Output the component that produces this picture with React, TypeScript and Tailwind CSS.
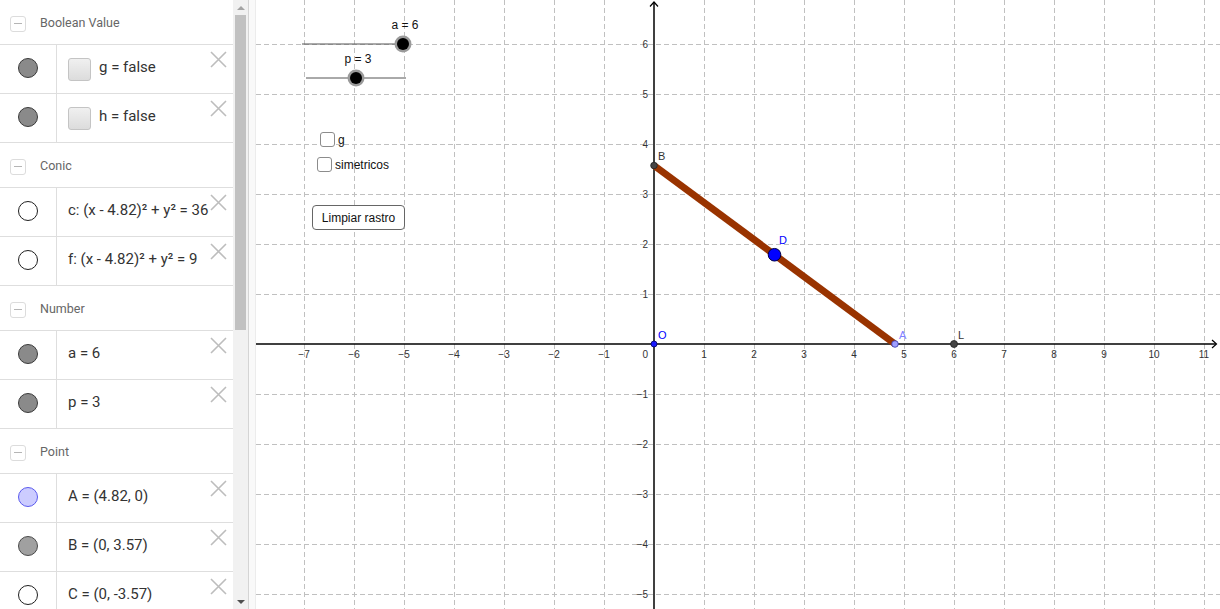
import React from "react";

type Dot = "grey" | "white" | "blue" | "lightgrey";

type Entry =
  | { type: "header"; label: string }
  | { type: "row"; dot: Dot; text: string; checkbox?: boolean };

const entries: Entry[] = [
  { type: "header", label: "Boolean Value" },
  { type: "row", dot: "grey", text: "g = false", checkbox: true },
  { type: "row", dot: "grey", text: "h = false", checkbox: true },
  { type: "header", label: "Conic" },
  { type: "row", dot: "white", text: "c: (x - 4.82)² + y² = 36" },
  { type: "row", dot: "white", text: "f: (x - 4.82)² + y² = 9" },
  { type: "header", label: "Number" },
  { type: "row", dot: "grey", text: "a = 6" },
  { type: "row", dot: "grey", text: "p = 3" },
  { type: "header", label: "Point" },
  { type: "row", dot: "blue", text: "A = (4.82, 0)" },
  { type: "row", dot: "lightgrey", text: "B = (0, 3.57)" },
  { type: "row", dot: "white", text: "C = (0, -3.57)" },
];

const dotClass: Record<Dot, string> = {
  grey: "bg-[#8a8a8a] border-[#3a3a3a]",
  white: "bg-white border-[#1f1f1f]",
  blue: "bg-[#ccccff] border-[#5a5aee]",
  lightgrey: "bg-[#a0a0a0] border-[#4a4a4a]",
};

function CloseIcon() {
  return (
    <svg width="17" height="17" viewBox="0 0 17 17" className="absolute right-[6px] top-[6px]">
      <path d="M1 1 L16 16 M16 1 L1 16" stroke="#bdbdbd" strokeWidth="1.6" fill="none" />
    </svg>
  );
}

function AlgebraView() {
  return (
    <div className="w-[233px] h-full overflow-hidden bg-white" style={{ fontFamily: "Roboto, 'Liberation Sans', sans-serif" }}>
      {entries.map((e, i) =>
        e.type === "header" ? (
          <div key={i} className="h-[45px] flex items-center pt-[3px] pl-[10px] border-b border-[#dedede]">
            <div className="w-[16px] h-[16px] rounded-[3px] border border-[#dcdcdc] flex items-center justify-center">
              <div className="w-[8px] h-[1.5px] bg-[#b5b5b5]" />
            </div>
            <span className="ml-[14px] text-[12.5px] text-[#666]">{e.label}</span>
          </div>
        ) : (
          <div key={i} className="relative h-[49px] flex border-b border-[#dedede]">
            <div className="w-[57px] shrink-0 border-r border-[#dedede] flex items-center justify-center pb-[3px]">
              <div className={`w-[20px] h-[20px] rounded-full border ${dotClass[e.dot]}`} />
            </div>
            <div className="flex-1 flex items-center pl-[11px] pb-[3px] overflow-hidden whitespace-nowrap">
              {e.checkbox && (
                <div className="w-[23px] h-[23px] mr-[8px] mt-[4px] rounded-[3px] border border-[#c4c4c4] bg-gradient-to-b from-[#f0f0f0] to-[#dcdcdc]" />
              )}
              <span className="text-[15px] text-[#333]">{e.text}</span>
            </div>
            <CloseIcon />
          </div>
        )
      )}
    </div>
  );
}

function Scrollbar() {
  return (
    <div className="w-[15px] h-full bg-[#f1f1f1] flex flex-col items-center">
      <div className="h-[15px] flex items-center justify-center">
        <div className="w-0 h-0 border-l-[4px] border-r-[4px] border-b-[4px] border-l-transparent border-r-transparent border-b-[#a3a3a3]" />
      </div>
      <div className="w-[11px] h-[315px] bg-[#c1c1c1]" />
      <div className="flex-1" />
      <div className="h-[15px] flex items-center justify-center">
        <div className="w-0 h-0 border-l-[4px] border-r-[4px] border-t-[4px] border-l-transparent border-r-transparent border-t-[#505050]" />
      </div>
    </div>
  );
}

const ox = 654;
const oy = 344;
const u = 50;
const fmt = (n: number) => (n < 0 ? `\u2212${-n}` : `${n}`);

function Graphics() {
  const xTicks = Array.from({ length: 19 }, (_, i) => i - 7).filter((n) => n !== 0);
  const yTicks = [6, 5, 4, 3, 2, 1, -1, -2, -3, -4, -5];
  const vLines = Array.from({ length: 19 }, (_, i) => ox + (i - 7) * u).filter((x) => x !== ox);
  const hLines = yTicks.map((n) => oy - n * u);
  const Bx = ox;
  const By = oy - 3.57 * u;
  const Ax = ox + 4.82 * u;
  const Dx = (Ax + Bx) / 2;
  const Dy = (oy + By) / 2;

  return (
    <svg width="964" height="609" viewBox="256 0 964 609" className="block" style={{ fontFamily: "'Liberation Sans', Arial, sans-serif" }}>
      {vLines.map((x) => (
        <line key={`v${x}`} x1={x + 0.5} y1={0} x2={x + 0.5} y2={609} stroke="#c0c0c0" strokeDasharray="5 3" />
      ))}
      {hLines.map((y) => (
        <line key={`h${y}`} x1={256} y1={y + 0.5} x2={1220} y2={y + 0.5} stroke="#c0c0c0" strokeDasharray="5 3" />
      ))}

      {/* axes */}
      <line x1={256} y1={oy} x2={1216} y2={oy} stroke="#000" strokeWidth="1.5" />
      <polyline points="1212,340 1216.5,344 1212,348" stroke="#000" strokeWidth="1.2" fill="none" />
      <line x1={ox} y1={2} x2={ox} y2={609} stroke="#000" strokeWidth="1.5" />
      <polyline points="650,6.5 654,2 658,6.5" stroke="#000" strokeWidth="1.2" fill="none" />

      {xTicks.map((n) => (
        <text key={`xl${n}`} x={ox + n * u} y={358} fontSize="10" fill="#333" textAnchor="middle">
          {fmt(n)}
        </text>
      ))}
      <text x={648} y={358} fontSize="10" fill="#333" textAnchor="end">0</text>
      {yTicks.map((n) => (
        <text key={`yl${n}`} x={648} y={oy - n * u + 4} fontSize="10" fill="#333" textAnchor="end">
          {fmt(n)}
        </text>
      ))}

      {/* sliders */}
      <line x1={302} y1={44} x2={403} y2={44} stroke="#555" strokeWidth="1" />
      <circle cx={403} cy={44} r={8.5} fill="#9a9a9a" />
      <circle cx={403} cy={44} r={6} fill="#000" />
      <text x={405} y={29} fontSize="12" fill="#111" textAnchor="middle">a = 6</text>

      <line x1={306} y1={78} x2={406} y2={78} stroke="#555" strokeWidth="1" />
      <circle cx={356} cy={78} r={8.5} fill="#9a9a9a" />
      <circle cx={356} cy={78} r={6} fill="#000" />
      <text x={358} y={63} fontSize="12" fill="#111" textAnchor="middle">p = 3</text>

      {/* segment and points */}
      <line x1={Bx} y1={By} x2={Ax} y2={oy} stroke="#993300" strokeWidth="7" />
      <circle cx={Dx} cy={Dy} r={6.3} fill="#0000ff" stroke="#000044" strokeWidth="1" />
      <text x={779} y={244} fontSize="11" fill="#0000ff">D</text>

      <circle cx={Bx} cy={By} r={3.3} fill="#444" stroke="#222" strokeWidth="0.8" />
      <text x={658} y={160} fontSize="11" fill="#333">B</text>

      <circle cx={ox} cy={oy} r={3} fill="#1a1aff" stroke="#000066" strokeWidth="0.8" />
      <text x={658} y={338.5} fontSize="11" fill="#0000ff">O</text>

      <circle cx={Ax} cy={oy} r={3.3} fill="#9f9fff" stroke="#3333aa" strokeWidth="0.8" />
      <text x={899} y={339} fontSize="11" fill="#7f7fff">A</text>

      <circle cx={954} cy={oy} r={3.5} fill="#444" stroke="#222" strokeWidth="0.8" />
      <text x={958} y={339} fontSize="11" fill="#333">L</text>
    </svg>
  );
}

export default function App() {
  return (
    <div className="flex w-[1220px] h-[609px] overflow-hidden bg-white">
      <AlgebraView />
      <Scrollbar />
      <div className="w-[8px] h-full border-l border-r border-l-[#d4d4d4] border-r-[#ececec] bg-[#f9f9f9]" />

      <div className="relative flex-1 h-full" style={{ fontFamily: "'Liberation Sans', Arial, sans-serif" }}>
        <Graphics />

        <div className="absolute left-[64px] top-[132px] flex items-center gap-[3px] text-[12px] text-[#111]">
          <div className="w-[15px] h-[15px] rounded-[3px] border-[1.5px] border-[#8c8c8c] bg-white" />
          <span className="leading-none">g</span>
        </div>
        <div className="absolute left-[61px] top-[157px] flex items-center gap-[3px] text-[12px] text-[#111]">
          <div className="w-[15px] h-[15px] rounded-[3px] border-[1.5px] border-[#8c8c8c] bg-white" />
          <span className="leading-none">simetricos</span>
        </div>

        <button className="absolute left-[56px] top-[205px] w-[93px] h-[25px] rounded-[4px] border-[1.5px] border-[#666] bg-white text-[12px] text-[#111] flex items-center justify-center">
          Limpiar rastro
        </button>
      </div>
    </div>
  );
}
